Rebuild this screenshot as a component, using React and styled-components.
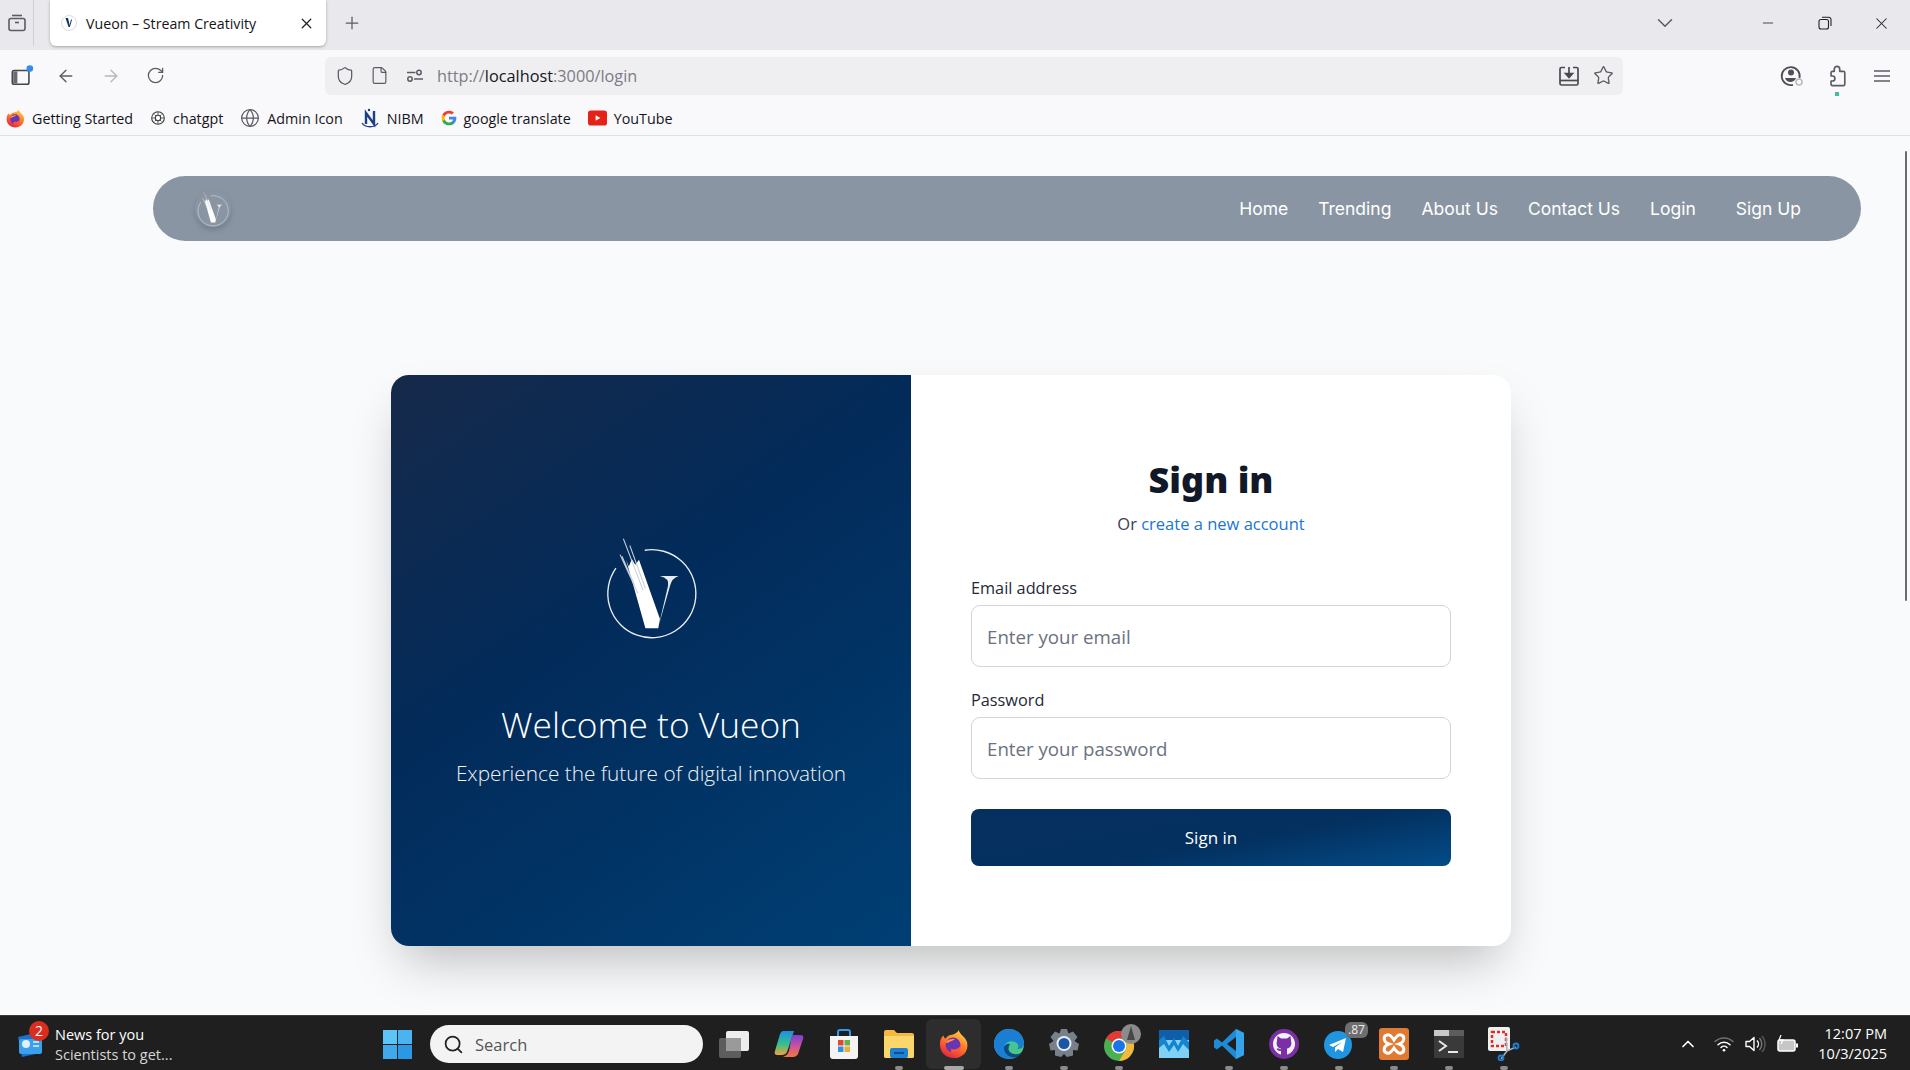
import styled, { createGlobalStyle } from 'styled-components';
import { ArrowLeft, ArrowRight, RotateCw, Shield, File, Star, X, Plus, ChevronDown, ChevronUp, Minus, Search, Globe } from 'lucide-react';

const UI_FONT = "'Open Sans', 'Noto Sans', sans-serif";

const GlobalStyle = createGlobalStyle`
  html, body {
    margin: 0;
    height: 100%;
    overflow: hidden;
    background: #f9fafb;
  }
  * {
    box-sizing: border-box;
  }
`;

function VueonMark({ size, ring = '#e8edf3' }) {
  return (
    <svg width={size} height={size} viewBox="130 80 300 310">
      <path d="M175 175A130 130 0 1 0 260 122" fill="none" stroke={ring} strokeWidth="4" />
      <path d="M205 150L213 170L222 148L232 165L243 150L305 325L300 352L262 352Z" fill="#fff" />
      <path d="M197 88L255 240M187 135L240 250M216 108L262 235M193 140L230 225" stroke="#c8d0dc" strokeWidth="3" fill="none" />
      <path d="M302 342L329 226Q333 205 305 198L360 198Q340 205 335 226Z" fill="#e6ebf1" />
    </svg>
  );
}

function Favicon() {
  return (
    <svg width="16" height="16" viewBox="0 0 16 16">
      <circle cx="8" cy="8" r="7.5" fill="#fff" stroke="#d8dce2" />
      <path d="M4.5 3L7 3L9 12L7.5 12Z" fill="#0f2f63" />
      <path d="M8.5 11.5L10.6 4.5" stroke="#0f2f63" />
    </svg>
  );
}

function IconTabs() {
  return (
    <svg width="20" height="20" viewBox="0 0 20 20" fill="none" stroke="#5b5b66" strokeWidth="1.6">
      <path d="M5 2.5H15" />
      <rect x="2" y="5.5" width="16" height="12" rx="2" />
      <path d="M8 9.5H12" />
    </svg>
  );
}

function IconSidebar() {
  return (
    <svg width="24" height="24" viewBox="0 0 26 26" fill="none">
      <rect x="2.5" y="7" width="18" height="15" rx="2" stroke="#45454e" strokeWidth="1.7" />
      <rect x="3.5" y="8" width="4.500" height="13" fill="#6a6a73" />
      <circle cx="21.5" cy="5" r="3.600" fill="#2f8fe8" />
    </svg>
  );
}

function IconPermissions() {
  return (
    <svg width="20" height="20" viewBox="0 0 20 20" fill="none" stroke="#5b5b66" strokeWidth="1.5">
      <circle cx="14" cy="6.5" r="2.2" />
      <path d="M2 6.5H10.5" />
      <circle cx="5" cy="13" r="2.2" />
      <path d="M9 13H18" />
    </svg>
  );
}

function IconSave() {
  return (
    <svg width="22" height="22" viewBox="0 0 22 22" fill="none" stroke="#4a4a53" strokeWidth="1.7">
      <path d="M7 2.5H3.5A1.5 1.5 0 0 0 2 4V18.500A1.500 1.500 0 0 0 3.500 20H18.500A1.500 1.500 0 0 0 20 18.500V4A1.500 1.500 0 0 0 18.500 2.500H15" />
      <path d="M2 15.500H20" />
      <path d="M11 2V11" />
      <path d="M7.500 8.500L11 12.500L14.500 8.500Z" fill="#4a4a53" />
    </svg>
  );
}

function IconAccount() {
  return (
    <svg width="24" height="24" viewBox="0 0 24 24" fill="none">
      <path d="M19.500 14A9 9 0 1 0 13 20.800" stroke="#4f4f58" strokeWidth="1.800" />
      <circle cx="11" cy="8.500" r="3" fill="#4f4f58" />
      <path d="M5 14H16A6 6 0 0 1 11 18A6 6 0 0 1 5 14Z" fill="#4f4f58" />
      <circle cx="19" cy="18" r="3" stroke="#b9b9c0" strokeWidth="1.500" />
    </svg>
  );
}

function IconPuzzle() {
  return (
    <svg width="22" height="22" viewBox="0 0 24 24" fill="none" stroke="#5b5b66" strokeWidth="1.800" strokeLinejoin="round">
      <path d="M9 6V4.500A3 3 0 0 1 15 4.500V7H19A1.500 1.500 0 0 1 20.500 8.500V21A1.500 1.500 0 0 1 19 22.500H7A1.500 1.500 0 0 1 5.500 21V17.500H7A2.750 2.750 0 0 0 7 12H5.500V8.500A1.500 1.500 0 0 1 7 7H9Z" />
    </svg>
  );
}

function IconHamburger() {
  return (
    <svg width="18" height="16" viewBox="0 0 18 16" stroke="#5b5b66" strokeWidth="1.700">
      <path d="M1 3H17M1 8H17M1 13H17" />
    </svg>
  );
}

function IconRestore() {
  return (
    <svg width="14" height="14" viewBox="0 0 14 14" fill="none" stroke="#222" strokeWidth="1.100">
      <rect x="1" y="3.500" width="9.500" height="9.500" rx="2" />
      <path d="M4 1.200H10.500A2.500 2.500 0 0 1 13 3.700V10" />
    </svg>
  );
}

function FirefoxIcon({ size = 19 }) {
  return (
    <svg width={size} height={size} viewBox="0 0 32 32">
      <defs>
        <linearGradient id="ffg" x1="0.700" y1="0" x2="0.200" y2="1">
          <stop offset="0" stopColor="#ffcf3f" />
          <stop offset="0.450" stopColor="#ff7a2b" />
          <stop offset="1" stopColor="#e31b3f" />
        </linearGradient>
      </defs>
      <path d="M21 1C22 6 28 8 30 14C32 24 25 31 16 31C7 31 1 25 1 16C1 12 3 8 5 7C5 9 6 10 7 10C9 7 12 6 14 6C17 5 20 4 21 1Z" fill="url(#ffg)" />
      <circle cx="15" cy="17" r="8" fill="#6a35b5" />
      <path d="M7 14C10 11 14 10 17 11C15 13 11 13 9 15Z" fill="#ff9a2e" />
      <path d="M13 21C17 23 22 21 24 16C24 22 19 26 13 25Z" fill="#ff5a2e" />
    </svg>
  );
}

function ChatgptIcon() {
  return (
    <svg width="16" height="16" viewBox="0 0 24 24" fill="none" stroke="#3c3c3c" strokeWidth="1.600">
      <circle cx="12" cy="12" r="9.500" />
      <path d="M7 7L17 17M17 7L7 17M12 3V21M3 12H21" strokeWidth="1.200" />
      <circle cx="12" cy="12" r="4" fill="#fff" />
    </svg>
  );
}

function NibmIcon() {
  return (
    <svg width="20" height="20" viewBox="0 0 20 20" fill="none">
      <path d="M6 16V5L14 16V3" stroke="#1c3f86" strokeWidth="2.400" />
      <path d="M2 15C5 20 15 20 18 15" stroke="#1c3f86" strokeWidth="1.400" />
      <circle cx="9" cy="2" r="1.200" fill="#1c3f86" />
    </svg>
  );
}

function GoogleIcon() {
  return (
    <svg width="16" height="16" viewBox="0 0 24 24">
      <path d="M23 12.300C23 11.500 22.900 10.700 22.800 10H12V14.300H18.200C17.900 15.700 17.100 16.900 15.900 17.700V20.500H19.500C21.700 18.500 23 15.700 23 12.300Z" fill="#4285f4" />
      <path d="M12 23C15 23 17.500 22 19.500 20.500L15.900 17.700C14.900 18.400 13.600 18.800 12 18.800C9.100 18.800 6.700 16.900 5.800 14.300H2.100V17.100C3.900 20.700 7.700 23 12 23Z" fill="#34a853" />
      <path d="M5.800 14.300C5.300 12.900 5.300 11.100 5.800 9.700V6.900H2.100C.6 9.900 .6 14.100 2.100 17.100Z" fill="#fbbc05" />
      <path d="M12 5.200C13.600 5.200 15 5.800 16.200 6.800L19.500 3.600C17.500 1.800 15 1 12 1C7.700 1 3.900 3.300 2.100 6.900L5.800 9.700C6.700 7.100 9.100 5.200 12 5.200Z" fill="#ea4335" />
    </svg>
  );
}

function YoutubeIcon() {
  return (
    <svg width="19" height="16" viewBox="0 0 20 16">
      <rect width="20" height="16" rx="3" fill="#e62117" />
      <path d="M8 5L13 8L8 11Z" fill="#fff" />
    </svg>
  );
}

function NewsIcon() {
  return (
    <svg width="28" height="30" viewBox="0 0 28 30">
      <path d="M2 8L19 4L24 24L6 28Z" fill="#1d70c9" />
      <rect x="3" y="10" width="23" height="15" rx="2" fill="#3aa0ee" />
      <circle cx="10" cy="15" r="4" fill="#dff2ff" />
      <path d="M17 13H23M17 17H23" stroke="#dff2ff" strokeWidth="1.500" />
    </svg>
  );
}

function WindowsIcon() {
  return (
    <svg width="29" height="29" viewBox="0 0 30 30">
      <rect x="0" y="0" width="14.500" height="14.500" fill="#5cc4f6" />
      <rect x="15.500" y="0" width="14.500" height="14.500" fill="#49b4f0" />
      <rect x="0" y="15.500" width="14.500" height="14.500" fill="#3fa9ec" />
      <rect x="15.500" y="15.500" width="14.500" height="14.500" fill="#2a98e4" />
    </svg>
  );
}

function TaskViewIcon() {
  return (
    <svg width="32" height="30" viewBox="0 0 32 30">
      <rect x="1" y="9" width="22" height="20" rx="2" fill="#5d5d5d" />
      <rect x="8" y="2" width="23" height="20" rx="2" fill="#ededed" />
      <rect x="8" y="9" width="15" height="13" fill="#9a9a9a" />
    </svg>
  );
}

function CopilotIcon() {
  return (
    <svg width="30" height="30" viewBox="0 0 30 30">
      <defs>
        <linearGradient id="cpa" x1="0.500" y1="0" x2="0.500" y2="1">
          <stop offset="0" stopColor="#1e8fe6" />
          <stop offset="0.550" stopColor="#36c08a" />
          <stop offset="1" stopColor="#f2a23c" />
        </linearGradient>
        <linearGradient id="cpb" x1="0.500" y1="0" x2="0.500" y2="1">
          <stop offset="0" stopColor="#7a3fd0" />
          <stop offset="0.550" stopColor="#d0559a" />
          <stop offset="1" stopColor="#f0783a" />
        </linearGradient>
      </defs>
      <path d="M9 2H20L13 23C12 25 10 26 8 26H3C1 26 0 24 1 22L6 5C7 3 8 2 9 2Z" fill="url(#cpa)" />
      <path d="M18 6H27C29 6 30 8 29 10L24 25C23 27 21 28 19 28H9C12 27 14 25 15 22Z" fill="url(#cpb)" />
    </svg>
  );
}

function StoreIcon() {
  return (
    <svg width="30" height="32" viewBox="0 0 30 32">
      <path d="M9 8V4A2 2 0 0 1 11 2H19A2 2 0 0 1 21 4V8" fill="none" stroke="#2f9be8" strokeWidth="2" />
      <path d="M1 8H29V28A3 3 0 0 1 26 31H4A3 3 0 0 1 1 28Z" fill="#f4f4f4" />
      <rect x="9" y="12" width="5.500" height="5.500" fill="#e2472f" />
      <rect x="15.500" y="12" width="5.500" height="5.500" fill="#66b34a" />
      <rect x="9" y="18.500" width="5.500" height="5.500" fill="#2f8fe0" />
      <rect x="15.500" y="18.500" width="5.500" height="5.500" fill="#f1a93a" />
    </svg>
  );
}

function FilesIcon() {
  return (
    <svg width="30" height="30" viewBox="0 0 30 30">
      <path d="M0 3A2 2 0 0 1 2 1H10L13 4H28A2 2 0 0 1 30 6V27A2 2 0 0 1 28 29H2A2 2 0 0 1 0 27Z" fill="#f4b93f" />
      <path d="M0 7H30V27A2 2 0 0 1 28 29H2A2 2 0 0 1 0 27Z" fill="#fbd76b" />
      <rect x="6" y="19" width="18" height="10" rx="2" fill="#1f7fd0" />
      <path d="M10 24H20" stroke="#0d4f8f" strokeWidth="2" />
    </svg>
  );
}

function EdgeIcon() {
  return (
    <svg width="30" height="30" viewBox="0 0 30 30">
      <defs>
        <linearGradient id="edg" x1="0" y1="0" x2="1" y2="1">
          <stop offset="0" stopColor="#2fc4d8" />
          <stop offset="1" stopColor="#55c667" />
        </linearGradient>
      </defs>
      <circle cx="15" cy="15" r="15" fill="url(#edg)" />
      <path d="M15 0C6 0 0 7 0 15C0 24 7 30 15 30C18 30 21 29 23 28C15 30 9 24 10 18C11 13 17 11 21 13C25 15 25 18 23 20C27 20 30 18 30 15C30 7 24 0 15 0Z" fill="#1a7fd4" />
      <path d="M10 18C9 24 15 30 23 28C25 27 27 25 28 23C25 26 19 26 16 23C14 21 14 18 16 15C13 14 11 16 10 18Z" fill="#0b4a86" />
    </svg>
  );
}

function SettingsIcon() {
  return (
    <svg width="30" height="30" viewBox="0 0 30 30">
      <path d="M12 0H18L19.500 4.500L24 2.500L28.500 8L25.500 12L30 15L28.500 21.500L24 21L24 26.500L18 28L15 25L12 28L6 26.500L6 21L1.500 21.500L0 15L4.500 12L1.500 8L6 2.500L10.500 4.500Z" fill="#78808a" />
      <circle cx="15" cy="14.500" r="7.500" fill="#e8eef4" />
      <circle cx="15" cy="14.500" r="5.500" fill="#1757a6" />
    </svg>
  );
}

function ChromeIcon() {
  return (
    <svg width="30" height="36" viewBox="0 0 30 36" overflow="visible">
      <circle cx="15" cy="20" r="15" fill="#4caf50" />
      <path d="M15 5A15 15 0 0 1 28 12.500H15A7.500 7.500 0 0 0 8.500 16.300L2 12.500A15 15 0 0 1 15 5Z" fill="#e53935" />
      <path d="M28 12.500A15 15 0 0 1 15 35L21.500 24A7.500 7.500 0 0 0 21.500 16Z" fill="#f2b93c" />
      <circle cx="15" cy="20" r="7.500" fill="#fff" />
      <circle cx="15" cy="20" r="6" fill="#1a73e8" />
      <circle cx="27" cy="8" r="10" fill="#8b8b8b" />
      <path d="M27 0L31 14H23Z" fill="#474747" />
    </svg>
  );
}

function PhotosIcon() {
  return (
    <svg width="30" height="28" viewBox="0 0 30 28">
      <rect width="30" height="28" fill="#7fd2f5" />
      <rect width="30" height="10" fill="#0f5fa8" />
      <path d="M0 10L5 6L10 16L15 8L19 16L24 6L30 12V20L24 14L19 22L15 15L10 22L5 14L0 18Z" fill="#1784d0" />
    </svg>
  );
}

function VscodeIcon() {
  return (
    <svg width="30" height="32" viewBox="0 0 30 32">
      <path d="M22 1L30 5V27L22 31L8 17.500L3 21.500L0 19.500V12.500L3 10.500L8 14.500ZM22 9L13 16L22 23Z" fill="#1f8ad6" fillRule="evenodd" />
      <path d="M22 1L30 5V27L22 31Z" fill="#35a4ea" />
    </svg>
  );
}

function GithubIcon() {
  return (
    <svg width="30" height="30" viewBox="0 0 30 30">
      <circle cx="15" cy="15" r="15" fill="#7b2fa5" />
      <circle cx="15" cy="15" r="11" fill="#f4f0f7" />
      <path d="M8.500 7L12 9.500H18L21.500 7L22 12C23 15 22 19 18 19.500V26H12V22C9.500 22.500 8 21 7.500 19.500H10C11 20.500 11.500 20.500 12 20V19.500C8 19 7 15 8 12Z" fill="#7b2fa5" />
    </svg>
  );
}

function TelegramIcon() {
  return (
    <svg width="30" height="30" viewBox="0 0 30 30">
      <circle cx="14" cy="16" r="14" fill="#2196e0" />
      <path d="M5 16L22 9L19 23L14 20L11 23L11 18.500L18 13L9 18Z" fill="#fff" />
    </svg>
  );
}

function XamppIcon() {
  return (
    <svg width="30" height="32" viewBox="0 0 30 32">
      <rect width="30" height="32" rx="3" fill="#e07a33" />
      <path d="M8 7C11 6 13 9 15 12C17 9 19 6 22 7C26 8 26 14 20 16C26 18 26 24 22 25C19 26 17 23 15 20C13 23 11 26 8 25C4 24 4 18 10 16C4 14 4 8 8 7Z" fill="none" stroke="#fff" strokeWidth="3" />
    </svg>
  );
}

function TerminalIcon() {
  return (
    <svg width="30" height="28" viewBox="0 0 30 28">
      <rect width="30" height="28" rx="1" fill="#3a3a3a" />
      <rect width="30" height="6" fill="#5d5d5d" />
      <rect width="15" height="6" fill="#c8c8c8" />
      <path d="M5 11L12 16L5 21" fill="none" stroke="#e8e8e8" strokeWidth="2" />
      <path d="M14 22H24" stroke="#e8e8e8" strokeWidth="2" />
    </svg>
  );
}

function SnipIcon() {
  return (
    <svg width="32" height="34" viewBox="0 0 32 34">
      <rect width="22" height="24" rx="2" fill="#f0f0f0" />
      <rect x="4" y="5" width="14" height="14" fill="none" stroke="#e02b2b" strokeWidth="2.500" strokeDasharray="3 2" />
      <path d="M18 10L19 24L13 32M18 10L19 24L28 20" fill="none" stroke="#aab0b8" strokeWidth="1.500" />
      <circle cx="13" cy="31" r="2.500" fill="none" stroke="#1c7fd6" strokeWidth="1.800" />
      <circle cx="28" cy="19" r="2.500" fill="none" stroke="#1c7fd6" strokeWidth="1.800" />
    </svg>
  );
}

function WifiIcon() {
  return (
    <svg width="20" height="16" viewBox="0 0 20 16" fill="none" strokeLinecap="round">
      <path d="M1 5.500A13 13 0 0 1 19 5.500" stroke="#6f6f6f" strokeWidth="1.500" />
      <path d="M4 8.700A8.500 8.500 0 0 1 16 8.700" stroke="#fff" strokeWidth="1.500" />
      <path d="M7 11.500A4.300 4.300 0 0 1 13 11.500" stroke="#fff" strokeWidth="1.500" />
      <circle cx="10" cy="14.300" r="1.300" fill="#fff" />
    </svg>
  );
}

function SpeakerIcon() {
  return (
    <svg width="21" height="18" viewBox="0 0 21 18" fill="none" strokeWidth="1.400">
      <path d="M1 6.500H4.500L9 2.500V15.500L4.500 11.500H1Z" stroke="#fff" strokeLinejoin="round" />
      <path d="M12 5.500A5 5 0 0 1 12 12.500" stroke="#fff" />
      <path d="M14.500 3A9 9 0 0 1 14.500 15" stroke="#7a7a7a" />
      <path d="M17 1A12 12 0 0 1 17 17" stroke="#555" />
    </svg>
  );
}

function BatteryIcon() {
  return (
    <svg width="22" height="18" viewBox="0 0 22 18" fill="none" stroke="#fff" strokeWidth="1.500">
      <rect x="1" y="5" width="17" height="11" rx="2" fill="#fff" fillOpacity="0.750" />
      <path d="M20 8.500V12.500" strokeWidth="2" />
      <path d="M4 0L2 5H6L4 9" stroke="#fff" strokeWidth="1.200" />
    </svg>
  );
}

const bookmarks = [
  { label: 'Getting Started', icon: <FirefoxIcon /> },
  { label: 'chatgpt', icon: <ChatgptIcon /> },
  { label: 'Admin Icon', icon: <Globe size={20} color="#5b5b66" strokeWidth={1.500} /> },
  { label: 'NIBM', icon: <NibmIcon /> },
  { label: 'google translate', icon: <GoogleIcon /> },
  { label: 'YouTube', icon: <YoutubeIcon /> },
];

const navLinks = ['Home', 'Trending', 'About Us', 'Contact Us', 'Login'];

const taskbarApps = [
  { name: 'taskview', icon: <TaskViewIcon /> },
  { name: 'copilot', icon: <CopilotIcon /> },
  { name: 'store', icon: <StoreIcon /> },
  { name: 'files', icon: <FilesIcon />, dot: true },
  { name: 'firefox', icon: <FirefoxIcon size={30} />, dot: true, active: true },
  { name: 'edge', icon: <EdgeIcon />, dot: true },
  { name: 'settings', icon: <SettingsIcon />, dot: true },
  { name: 'chrome', icon: <ChromeIcon />, dot: true },
  { name: 'photos', icon: <PhotosIcon /> },
  { name: 'vscode', icon: <VscodeIcon />, dot: true },
  { name: 'github', icon: <GithubIcon />, dot: true },
  { name: 'telegram', icon: <TelegramIcon />, dot: true, badge: '.87' },
  { name: 'xampp', icon: <XamppIcon />, dot: true },
  { name: 'terminal', icon: <TerminalIcon />, dot: true },
  { name: 'snip', icon: <SnipIcon />, dot: true },
];

export default function App() {
  return (
    <Screen>
      <GlobalStyle />
      <TabStrip>
        <TabsButton>
          <IconTabs />
        </TabsButton>
        <Tab>
          <Favicon />
          <TabTitle>Vueon – Stream Creativity</TabTitle>
          <X size={17} color="#222" strokeWidth={1.800} />
        </Tab>
        <NewTab>
          <Plus size={20} color="#5b5b66" strokeWidth={1.500} />
        </NewTab>
        <TabListButton>
          <ChevronDown size={26} color="#5b5b66" strokeWidth={1.400} />
        </TabListButton>
        <WindowButton>
          <Minus size={16} color="#222" strokeWidth={1.200} />
        </WindowButton>
        <WindowButton>
          <IconRestore />
        </WindowButton>
        <WindowButton>
          <X size={19} color="#222" strokeWidth={1.300} />
        </WindowButton>
      </TabStrip>

      <Toolbar>
        <SidebarButton>
          <IconSidebar />
        </SidebarButton>
        <ToolButton>
          <ArrowLeft size={20} color="#5b5b66" strokeWidth={1.600} />
        </ToolButton>
        <ToolButton>
          <ArrowRight size={20} color="#b6b6bc" strokeWidth={1.600} />
        </ToolButton>
        <ToolButton>
          <RotateCw size={19} color="#5b5b66" strokeWidth={1.600} />
        </ToolButton>
        <UrlBar>
          <UrlIcon>
            <Shield size={20} color="#5b5b66" strokeWidth={1.500} />
          </UrlIcon>
          <UrlIcon>
            <File size={19} color="#5b5b66" strokeWidth={1.500} />
          </UrlIcon>
          <UrlIcon>
            <IconPermissions />
          </UrlIcon>
          <UrlText>
            http://<b>localhost</b>:3000/login
          </UrlText>
          <UrlEnd>
            <UrlIcon>
              <IconSave />
            </UrlIcon>
            <UrlIcon>
              <Star size={21} color="#5b5b66" strokeWidth={1.500} />
            </UrlIcon>
          </UrlEnd>
        </UrlBar>
        <ToolEnd>
          <ToolButton>
            <IconAccount />
          </ToolButton>
          <ToolButton>
            <IconPuzzle />
            <ExtensionDot />
          </ToolButton>
          <ToolButton>
            <IconHamburger />
          </ToolButton>
        </ToolEnd>
      </Toolbar>

      <BookmarksBar>
        {bookmarks.map((b) => (
          <Bookmark key={b.label}>
            {b.icon}
            <span>{b.label}</span>
          </Bookmark>
        ))}
      </BookmarksBar>

      <Page>
        <Scrollbar />
        <NavBar>
          <NavLogo>
            <VueonMark size={36} />
          </NavLogo>
          <NavLinks>
            {navLinks.map((l) => (
              <NavLink key={l}>{l}</NavLink>
            ))}
            <SignUpLink>Sign Up</SignUpLink>
          </NavLinks>
        </NavBar>

        <CardRow>
          <Card>
            <WelcomePanel>
              <VueonMark size={105} />
              <WelcomeTitle>Welcome to Vueon</WelcomeTitle>
              <WelcomeText>Experience the future of digital innovation</WelcomeText>
            </WelcomePanel>
            <FormPanel>
              <FormTitle>Sign in</FormTitle>
              <FormSub>
                Or <a href="#register">create a new account</a>
              </FormSub>
              <Form onSubmit={(e) => e.preventDefault()}>
                <Field>
                  <Label>Email address</Label>
                  <Input type="email" placeholder="Enter your email" />
                </Field>
                <Field>
                  <Label>Password</Label>
                  <Input type="password" placeholder="Enter your password" />
                </Field>
                <SubmitButton type="submit">Sign in</SubmitButton>
              </Form>
            </FormPanel>
          </Card>
        </CardRow>
      </Page>

      <Taskbar>
        <NewsWidget>
          <NewsBadgeWrap>
            <NewsIcon />
            <NewsBadge>2</NewsBadge>
          </NewsBadgeWrap>
          <NewsText>
            <span>News for you</span>
            <small>Scientists to get...</small>
          </NewsText>
        </NewsWidget>
        <StartButton>
          <WindowsIcon />
        </StartButton>
        <SearchBox>
          <Search size={21} color="#222" strokeWidth={2} />
          <span>Search</span>
        </SearchBox>
        <AppRow>
          {taskbarApps.map((a) => (
            <AppSlot key={a.name} active={a.active}>
              {a.icon}
              {a.badge && <AppBadge>{a.badge}</AppBadge>}
              {a.dot && <AppDot active={a.active} />}
            </AppSlot>
          ))}
        </AppRow>
        <Tray>
          <TrayIcon width={39}>
            <ChevronUp size={20} color="#fff" strokeWidth={2} />
          </TrayIcon>
          <TrayIcon width={33}>
            <WifiIcon />
          </TrayIcon>
          <TrayIcon width={31}>
            <SpeakerIcon />
          </TrayIcon>
          <TrayIcon width={33}>
            <BatteryIcon />
          </TrayIcon>
          <Clock>
            <span>12:07 PM</span>
            <span>10/3/2025</span>
          </Clock>
        </Tray>
      </Taskbar>
    </Screen>
  );
}

const Screen = styled.div`
  display: flex;
  flex-direction: column;
  width: 1910px;
  height: 1070px;
  font-family: ${UI_FONT};
  overflow: hidden;
`;

const TabStrip = styled.div`
  display: flex;
  align-items: flex-start;
  flex: none;
  height: 50px;
  background: #e9e9ed;
`;

const TabsButton = styled.div`
  display: flex;
  align-items: center;
  justify-content: center;
  width: 34px;
  height: 46px;
  margin-right: 16px;
  border-right: 1px solid #cfcfd4;
`;

const Tab = styled.div`
  display: flex;
  align-items: center;
  width: 276px;
  height: 46px;
  padding: 0 11px;
  background: #fff;
  border-radius: 0 0 6px 6px;
  box-shadow: 0 1px 3px rgba(0, 0, 0, 0.3);
`;

const TabTitle = styled.span`
  flex: 1;
  margin-left: 9px;
  font-size: 14.200px;
  color: #15141a;
  white-space: nowrap;
`;

const NewTab = styled.div`
  display: flex;
  align-items: center;
  justify-content: center;
  width: 52px;
  height: 46px;
`;

const TabListButton = styled.div`
  display: flex;
  align-items: center;
  justify-content: center;
  width: 46px;
  height: 46px;
  margin-left: auto;
  margin-right: 51px;
`;

const WindowButton = styled.div`
  display: flex;
  align-items: center;
  justify-content: center;
  width: 57px;
  height: 46px;
`;

const Toolbar = styled.div`
  display: flex;
  align-items: center;
  flex: none;
  height: 51px;
  background: #f9f9fb;
`;

const ToolButton = styled.div`
  position: relative;
  display: flex;
  align-items: center;
  justify-content: center;
  flex: none;
  width: 45px;
  height: 40px;
`;

const SidebarButton = styled(ToolButton)`
  width: 43px;
`;

const ExtensionDot = styled.i`
  position: absolute;
  left: 21px;
  bottom: 0;
  width: 4px;
  height: 4px;
  background: #3fbf9f;
`;

const UrlBar = styled.div`
  display: flex;
  align-items: center;
  width: 1298px;
  height: 38px;
  margin-left: 147px;
  padding: 0 2px;
  background: #efeff2;
  border-radius: 6px;
`;

const UrlIcon = styled.div`
  display: flex;
  align-items: center;
  justify-content: center;
  flex: none;
  width: 35px;
  height: 34px;
`;

const UrlText = styled.div`
  margin-left: 5px;
  font-size: 16.300px;
  color: #7b7b85;

  b {
    font-weight: 400;
    color: #15141a;
  }
`;

const UrlEnd = styled.div`
  display: flex;
  margin-left: auto;
`;

const ToolEnd = styled.div`
  display: flex;
  margin-left: auto;
  padding-right: 6px;
`;

const BookmarksBar = styled.div`
  display: flex;
  align-items: center;
  flex: none;
  gap: 17px;
  height: 35px;
  padding-left: 6px;
  background: #f9f9fb;
  border-bottom: 1px solid #e0e0e6;
`;

const Bookmark = styled.div`
  display: flex;
  align-items: center;
  gap: 7px;
  font-size: 14.300px;
  color: #15141a;
`;

const Page = styled.main`
  position: relative;
  flex: 1;
  background: #f9fafb;
  padding-top: 40px;
`;

const Scrollbar = styled.div`
  position: absolute;
  top: 15px;
  right: 3px;
  width: 2px;
  height: 450px;
  background: #6b6b73;
  border-radius: 1px;
`;

const NavBar = styled.nav`
  display: flex;
  align-items: center;
  justify-content: space-between;
  width: 1708px;
  height: 65px;
  margin-left: 153px;
  padding: 0 60px 0 42px;
  background: #8a95a3;
  border-radius: 33px;
`;

const NavLogo = styled.div`
  display: flex;
  align-items: center;
  justify-content: center;
  width: 36px;
  height: 36px;
  border-radius: 50%;
  box-shadow: 0 3px 5px rgba(70, 85, 110, 0.35);
`;

const NavLinks = styled.div`
  display: flex;
  gap: 30px;
`;

const NavLink = styled.a`
  font-family: Inter, sans-serif;
  font-size: 17.500px;
  font-weight: 400;
  color: #fff;
`;

const SignUpLink = styled(NavLink)`
  margin-left: 10px;
`;

const CardRow = styled.div`
  display: flex;
  justify-content: center;
  width: 1902px;
  margin-top: 134px;
`;

const Card = styled.section`
  display: flex;
  width: 1120px;
  height: 571px;
  background: #fff;
  border-radius: 18px;
  box-shadow: 0 25px 50px -12px rgba(0, 0, 0, 0.25);
  overflow: hidden;
`;

const WelcomePanel = styled.div`
  display: flex;
  flex-direction: column;
  align-items: center;
  flex: none;
  width: 520px;
  padding-top: 161px;
  background: linear-gradient(145deg, #16294a 0%, #022b5a 42%, #003f74 100%);
`;

const WelcomeTitle = styled.h2`
  margin: 58px 0 0;
  font-size: 35.300px;
  font-weight: 300;
  line-height: 50px;
  color: #fff;
`;

const WelcomeText = styled.p`
  margin: 9px 0 0;
  font-size: 20.800px;
  font-weight: 300;
  line-height: 30px;
  color: #f0f2f5;
`;

const FormPanel = styled.div`
  display: flex;
  flex-direction: column;
  align-items: center;
  flex: 1;
  padding: 79px 60px 0;
`;

const FormTitle = styled.h1`
  margin: 0;
  font-family: 'Noto Sans', sans-serif;
  font-size: 36px;
  font-weight: 900;
  line-height: 52px;
  color: #111827;
`;

const FormSub = styled.p`
  margin: 6px 0 0;
  font-size: 16.500px;
  line-height: 24px;
  color: #374151;

  a {
    color: #1976d2;
    text-decoration: none;
  }
`;

const Form = styled.form`
  display: flex;
  flex-direction: column;
  width: 100%;
  margin-top: 41px;
`;

const Field = styled.div`
  display: flex;
  flex-direction: column;
  margin-bottom: 22px;
`;

const Label = styled.label`
  margin-bottom: 5px;
  font-size: 16.300px;
  line-height: 23px;
  color: #1f2937;
`;

const Input = styled.input`
  height: 62px;
  padding: 0 15px;
  font-family: ${UI_FONT};
  font-size: 18.700px;
  background: #fff;
  border: 1px solid #d1d5db;
  border-radius: 9px;

  &::placeholder {
    color: #6b7280;
    opacity: 1;
  }
`;

const SubmitButton = styled.button`
  height: 57px;
  margin-top: 8px;
  font-family: ${UI_FONT};
  font-size: 17px;
  color: #fff;
  background: linear-gradient(170deg, #062f5f 0%, #03305f 55%, #044c88 100%);
  border: none;
  border-radius: 8px;
`;

const Taskbar = styled.footer`
  display: flex;
  align-items: center;
  flex: none;
  height: 55px;
  padding-top: 2px;
  background: #1f1f1f;
  border-top: 1px solid #3a3a3a;
  color: #fff;
`;

const NewsWidget = styled.div`
  display: flex;
  align-items: center;
  width: 364px;
  padding-left: 16px;
`;

const NewsBadgeWrap = styled.div`
  position: relative;
  display: flex;
  width: 39px;
`;

const NewsBadge = styled.span`
  position: absolute;
  top: -8px;
  left: 13px;
  width: 20px;
  height: 20px;
  font-size: 14px;
  line-height: 20px;
  text-align: center;
  background: #d92d20;
  border-radius: 50%;
`;

const NewsText = styled.div`
  display: flex;
  flex-direction: column;
  margin-top: 2px;
  font-size: 14.500px;
  line-height: 20px;

  small {
    font-size: 14.500px;
    color: #d6d6d6;
  }
`;

const StartButton = styled.div`
  display: flex;
  justify-content: center;
  flex: none;
  width: 66px;
`;

const SearchBox = styled.div`
  display: flex;
  align-items: center;
  flex: none;
  gap: 11px;
  width: 273px;
  height: 38px;
  padding-left: 13px;
  font-size: 16.500px;
  color: #555;
  background: #f3f3f3;
  border-radius: 19px;
`;

const AppRow = styled.div`
  display: flex;
  margin-left: 3px;
`;

const AppSlot = styled.div`
  position: relative;
  display: flex;
  align-items: center;
  justify-content: center;
  flex: none;
  width: 55px;
  height: 50px;
  background: ${(props) => (props.active ? '#2d2d2d' : 'transparent')};
  border-radius: 6px;
`;

const AppBadge = styled.span`
  position: absolute;
  top: 3px;
  left: 34px;
  padding: 0 3px;
  font-size: 12px;
  line-height: 16px;
  color: #eee;
  background: #6e6e6e;
  border-radius: 6px;
`;

const AppDot = styled.i`
  position: absolute;
  left: 50%;
  bottom: -1px;
  width: ${(props) => (props.active ? '20px' : '8px')};
  height: 4px;
  margin-left: ${(props) => (props.active ? '-10px' : '-4px')};
  background: ${(props) => (props.active ? '#a8a8a8' : '#8a8a8a')};
  border-radius: 2px;
`;

const Tray = styled.div`
  display: flex;
  align-items: center;
  margin-left: auto;
  padding-right: 23px;
`;

const TrayIcon = styled.div`
  display: flex;
  align-items: center;
  justify-content: center;
  flex: none;
  width: ${(props) => props.width}px;
`;

const Clock = styled.div`
  display: flex;
  flex-direction: column;
  align-items: flex-end;
  margin-left: 14px;
  font-size: 14.500px;
  line-height: 20px;
`;
